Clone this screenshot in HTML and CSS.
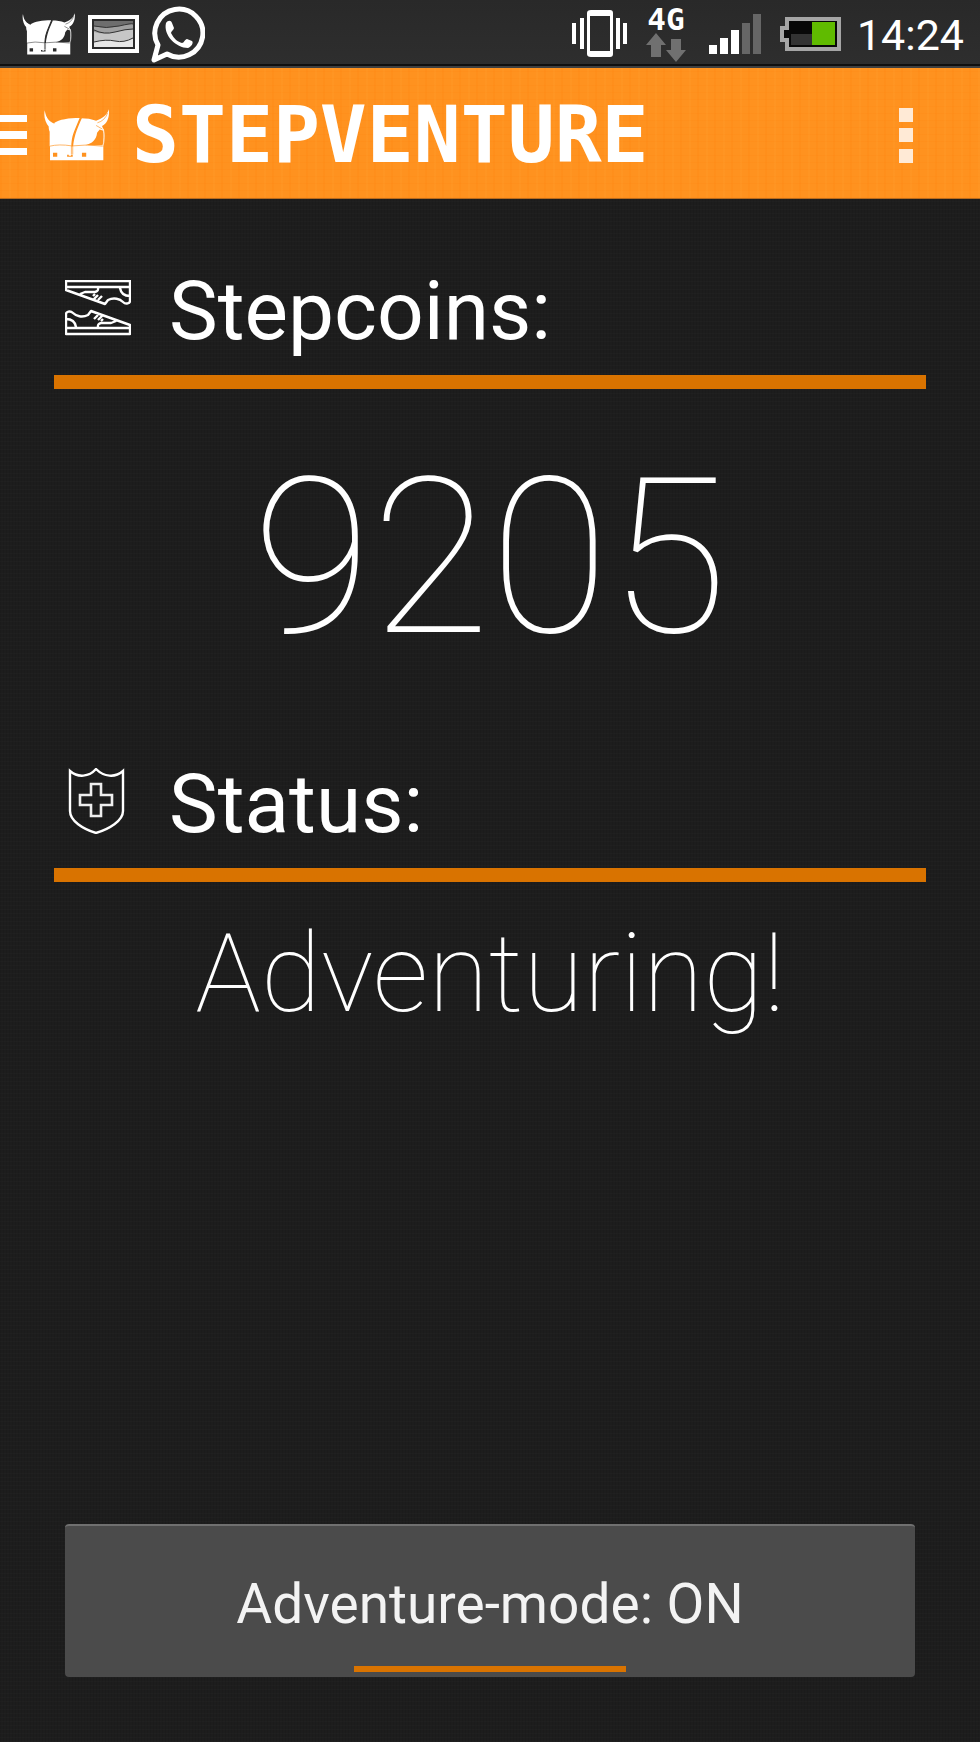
FILE: index.html
```html
<!DOCTYPE html>
<html lang="en">
<head>
<meta charset="utf-8">
<meta name="viewport" content="width=device-width, initial-scale=1">
<title>Stepventure</title>
<link rel="stylesheet" href="styles.css">
</head>
<body>
<svg class="defs" aria-hidden="true">
  <symbol id="helmet" viewBox="0 0 200 158">
    <path fill="currentColor" d="M2 4C5 22 11 36 29 43C46 31 76 27 108 27L97 54C87 77 83 91 83 113H17V69C15 63 14 59 14 53C4 42-2 22 2 4ZM112 28C128 28 145 30 158 36C178 29 192 18 197 1C199 24 193 43 176 52L181 64C184 78 182 98 178 113H88C87 95 91 80 97 64ZM18 113H180V156H18Z"/>
    <path class="cut" d="M161 72C159 93 146 105 125 110H178C181 95 182 80 180 66L169 62ZM110 27H115C104 51 92 78 88 113H84C85 84 98 56 110 27Z"/>
    <path class="cut-line" fill="none" stroke-width="2" d="M7 12C10 28 18 39 32 43M193 12C188 27 177 38 162 42M158 50L177 61M17 113Q45 106 84 112M88 112Q130 106 178 113M83 112V138M87 108V138"/>
    <path class="cut" d="M27 133H40V145H27ZM115 133H128V145H115ZM70 139H75V142H82V139H87V145H70Z"/>
    <path fill="none" stroke="currentColor" stroke-width="2" d="M180 60C185 78 183 98 179 113"/>
  </symbol>
</svg>
<div class="screen">
  <div class="status-bar">
    <div class="notifications">
      <svg class="helmet-small" aria-hidden="true"><use href="#helmet"/></svg>
      <svg class="photo" viewBox="0 0 51 38" aria-hidden="true">
        <path fill="#fff" d="M0 0H51V38H0Z"/><path fill="#2b2b2b" d="M4 4H47V34H4Z"/>
        <path fill="#6e6e6e" d="M6 6H45V32H6Z"/>
        <path fill="#a0a0a0" d="M6 11Q18 14 31 11T45 9V32H6Z"/>
        <path fill="#c6c6c6" d="M6 17Q16 20 27 17T45 14V32H6Z"/>
        <path fill="#e6e6e6" d="M6 27Q18 24 27 26T45 23V32H6Z"/>
        <path fill="none" stroke="#333" d="M6 11Q18 14 31 11T45 9M6 15Q16 20 27 17T45 14M6 27Q18 24 27 26T45 23"/>
      </svg>
      <svg class="chat" viewBox="0 0 54 58" aria-hidden="true">
        <path fill="none" stroke="#fff" stroke-width="5" stroke-linejoin="round" d="M3 55L7 40A24 24 0 1 1 16 49Z"/>
        <path fill="#fff" d="M15 18C17 15 20 15 21 18L23 23C23 25 20 26 20 28C23 34 27 37 31 38C33 38 34 34 36 34L41 36C43 38 40 42 37 43C25 43 12 30 15 18Z"/>
      </svg>
    </div>
    <div class="system">
      <svg class="vibrate" viewBox="0 0 56 48" aria-hidden="true">
        <path fill="#fff" fill-rule="evenodd" d="M19 0H38Q41 0 41 3V44Q41 47 38 47H19Q15 47 15 44V3Q15 0 19 0ZM18 6V41H38V6ZM0 13H4V34H0ZM8 8H12V39H8ZM44 8H48V39H44ZM51 13H55V34H51Z"/>
      </svg>
      <div class="network">
        <span class="network-type">4G</span>
        <svg class="arrows" viewBox="0 0 40 30" aria-hidden="true"><path fill="#707070" d="M10 0L20 12H15V24H5V12H0ZM25 6H35V17H40L30 29L20 17H25Z"/></svg>
      </div>
      <svg class="signal" viewBox="0 0 52 40" aria-hidden="true">
        <path fill="#fff" d="M0 31H8V40H0ZM11 24H19V40H11ZM22 16H30V40H22Z"/><path fill="#666" d="M33 9H41V40H33ZM44 0H52V40H44Z"/>
      </svg>
      <svg class="battery" viewBox="0 0 61 34" aria-hidden="true">
        <path fill="#a5a5a5" d="M5 0H61V34H5V25H0V9H5Z"/><path fill="#080808" d="M9 4H57V30H9V21H4V13H9Z"/>
        <path fill="#333" d="M11 17H32V28H11Z"/><path fill="#60bb00" d="M32 5H55V28H32Z"/>
      </svg>
      <time class="clock">14:24</time>
    </div>
  </div>

  <header class="app-bar">
    <button class="nav-button" aria-label="Open navigation">
      <svg class="drawer" viewBox="0 0 27 40" aria-hidden="true"><path fill="#fff" d="M0 0H27V7H0ZM0 16H27V24H0ZM0 33H27V40H0Z"/></svg>
      <svg class="helmet-large" aria-hidden="true"><use href="#helmet"/></svg>
    </button>
    <h1 class="brand">STEPVENTURE</h1>
    <button class="more" aria-label="More options">
      <svg class="more-icon" viewBox="0 0 14 55" aria-hidden="true"><path fill="#ffead6" d="M0 0H14V14H0ZM0 20H14V34H0ZM0 41H14V55H0Z"/></svg>
    </button>
  </header>

  <main class="content">
    <section class="panel">
      <h2 class="panel-title">
        <svg class="panel-icon" viewBox="0 0 66 56" aria-hidden="true">
          <g id="shoe" fill="none" stroke="#fff" stroke-width="2.4" stroke-linejoin="round">
            <path d="M1 1H65V7H1ZM1 7V10L40 24L43 20C49 17 55 19 58 22C61 25 65 23 65 21V7M55 8C56 14 60 16 65 16M15 14L20 12H30C34 11 33 9 33 7M29 19L33 15M33 20L37 16M28 16L30 14" />
          </g>
          <use href="#shoe" transform="rotate(180 33 27.5)"/>
        </svg>
        <span class="panel-text">Stepcoins:</span>
      </h2>
      <p class="coins">9205</p>
    </section>
    <section class="panel">
      <h2 class="panel-title">
        <svg class="panel-icon" viewBox="0 0 66 66" aria-hidden="true">
          <path fill="none" stroke="#fff" stroke-width="2.4" d="M5 3C13 10 24 9 31 1C39 9 50 10 58 3V43C58 53 44 61 31 65C18 61 5 53 5 43Z"/>
          <path fill="none" stroke="#eee" stroke-width="2.6" d="M26 16H36V27H47V37H36V48H26V37H15V27H26Z"/>
        </svg>
        <span class="panel-text">Status:</span>
      </h2>
      <p class="state">Adventuring!</p>
    </section>
    <button class="mode" aria-pressed="true">Adventure-mode: ON</button>
  </main>
</div>
</body>
</html>
```
FILE: styles.css
```css
* { box-sizing: border-box; }

body {
  margin: 0;
  background: #1d1d1d;
  color: #fff;
  font-family: Roboto, "Noto Sans", sans-serif;
}

h1, h2, p { margin: 0; font-weight: 400; }

button {
  border: 0;
  padding: 0;
  background: none;
  color: inherit;
  font: inherit;
  cursor: pointer;
}

svg { display: block; flex: none; }

.defs { position: absolute; width: 0; height: 0; }

.screen {
  display: flex;
  flex-direction: column;
  min-height: 100vh;
  background:
    repeating-linear-gradient(0deg, rgba(255, 255, 255, 0.012) 0 1px, transparent 1px 4px),
    repeating-linear-gradient(90deg, rgba(0, 0, 0, 0.08) 0 1px, transparent 1px 3px),
    #1d1d1d;
}

.status-bar {
  display: flex;
  justify-content: space-between;
  height: 68px;
  padding: 2px 16px 0 22px;
  border-bottom: 2px solid #404040;
  background: linear-gradient(#292929, #2e2e2e);
  box-shadow: inset 0 -2px #101010;
}

.notifications, .system { display: flex; align-items: center; }
.notifications { gap: 12px; }

.helmet-small { width: 54px; height: 42px; color: #fff; --cut: #2b2b2b; }
.photo { width: 51px; height: 38px; }
.chat { width: 54px; height: 58px; }

.cut { fill: var(--cut); }
.cut-line { stroke: var(--cut); }

.vibrate { width: 56px; height: 48px; margin-right: 18px; }

.network {
  display: flex;
  flex-direction: column;
  align-items: center;
  margin-right: 23px;
}

.network-type {
  font: bold 31px/28px "DejaVu Sans Mono", monospace;
}

.arrows { width: 40px; height: 30px; }
.signal { width: 52px; height: 40px; margin-right: 19px; }
.battery { width: 61px; height: 34px; margin-right: 16px; }
.clock { padding-top: 2px; font-size: 43px; line-height: 48px; }

.app-bar {
  display: flex;
  align-items: center;
  height: 131px;
  padding: 4px 67px 0 0;
  border-bottom: 1px solid #b96a1c;
  background:
    repeating-linear-gradient(90deg, rgba(255, 120, 0, 0.12) 0 2px, transparent 2px 9px, rgba(255, 170, 60, 0.12) 9px 11px, transparent 11px 17px),
    repeating-linear-gradient(0deg, rgba(255, 120, 0, 0.1) 0 1px, transparent 1px 7px),
    #ff921f;
}

.nav-button { display: flex; align-items: center; gap: 17px; }
.drawer { width: 27px; height: 40px; }
.helmet-large { width: 66px; height: 52px; color: #fff; --cut: #ff921f; }

.brand {
  flex: 1;
  margin-left: 22px;
  font: bold 78px/90px "DejaVu Sans Mono", monospace;
}

.more-icon { width: 14px; height: 55px; }

.content {
  flex: 1;
  display: flex;
  flex-direction: column;
  padding: 54px 54px 65px;
}

.panel { min-height: 493px; }

.panel-title {
  display: flex;
  align-items: center;
  gap: 38px;
  height: 136px;
  padding: 0 0 12px 11px;
  border-bottom: 14px solid #d97300;
  font-size: 82px;
  line-height: 96px;
}

.panel-icon { width: 66px; }
.panel-text { padding-top: 6px; }

.coins, .state { text-align: center; font-weight: 100; }
.coins { padding-top: 24px; font-size: 217px; line-height: 290px; }
.state { padding-top: 12px; font-size: 110px; line-height: 160px; }

.mode {
  position: relative;
  height: 153px;
  margin: auto 11px 0;
  padding-top: 4px;
  border-top: 2px solid #707070;
  border-radius: 4px;
  background: #4b4b4b;
  color: #f3f3f3;
  font-size: 55px;
}

.mode::after {
  content: "";
  position: absolute;
  bottom: 5px;
  left: 34%;
  width: 32%;
  height: 6px;
  background: #d97300;
}
```
